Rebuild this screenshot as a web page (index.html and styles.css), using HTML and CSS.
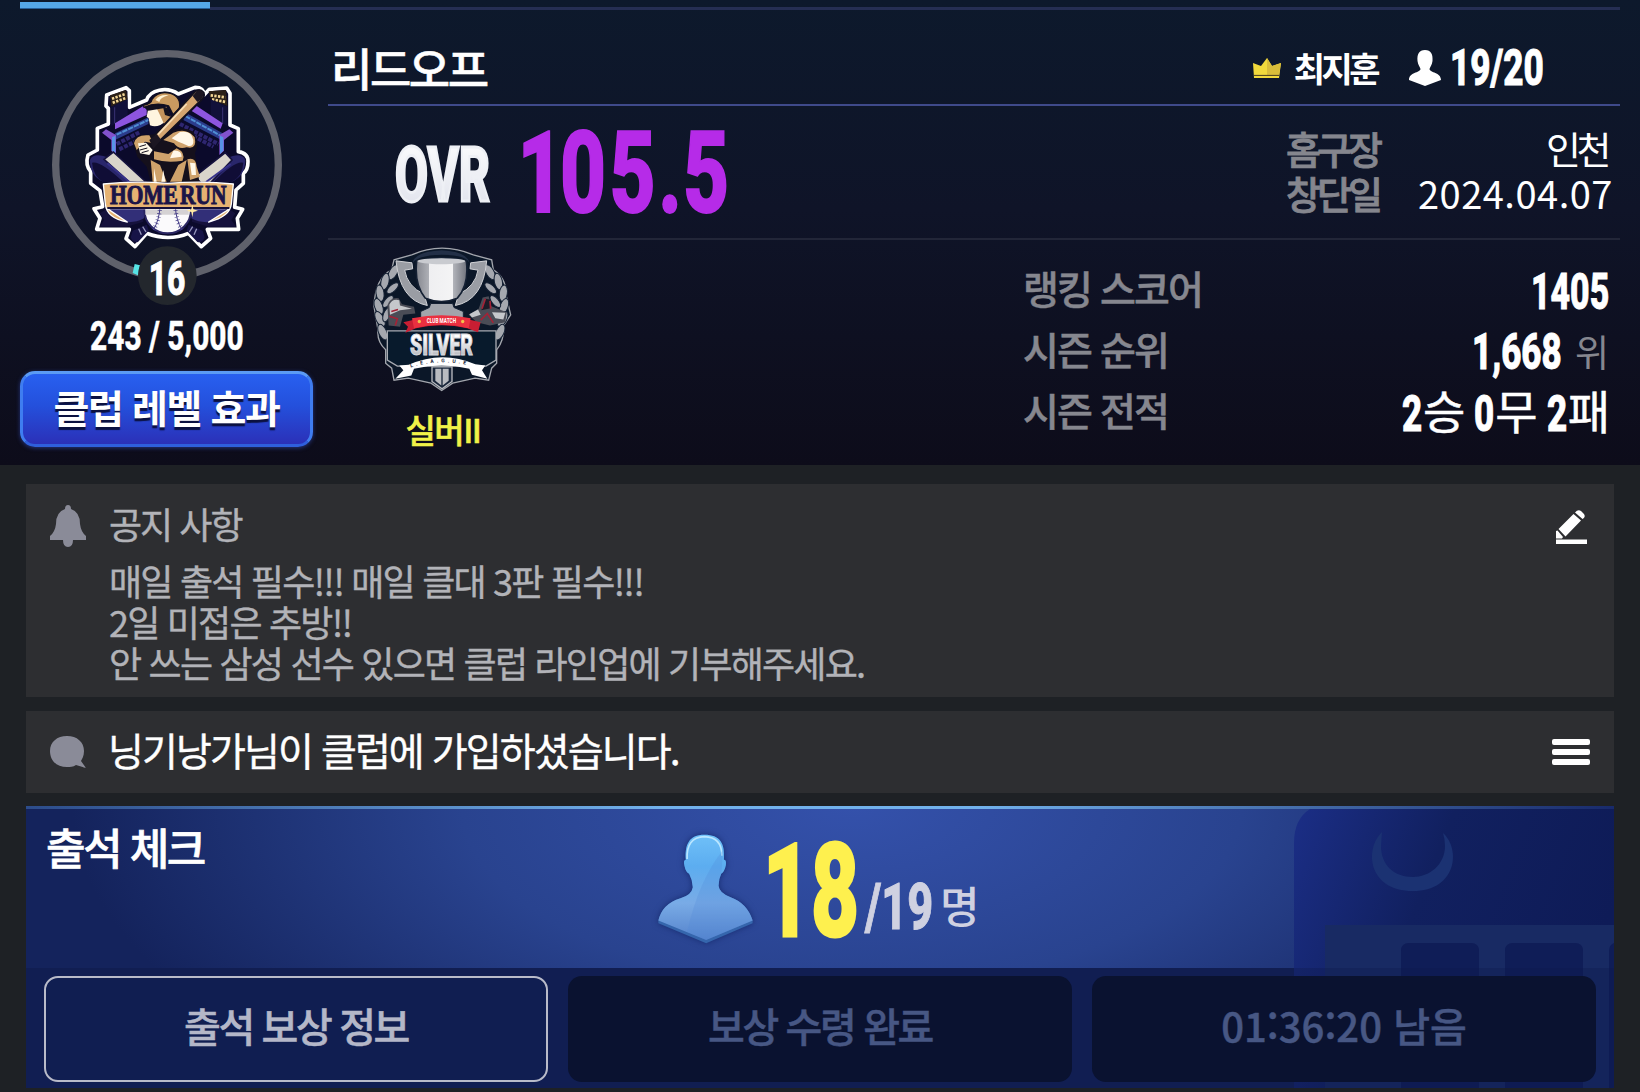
FILE: index.html
```html
<!DOCTYPE html>
<html lang="ko">
<head>
    <meta charset="UTF-8">
    <meta name="viewport" content="width=device-width, initial-scale=1.0">
    <title>리드오프</title>
    <link rel="stylesheet" href="styles.css">
</head>
<body>
    <!-- Club header -->
    <div class="club-header">
        <div class="tab-line">
            <div class="tab-active"></div>
            <div class="tab-rest"></div>
        </div>

        <div class="header-body">
            <div class="club-side">
                <svg class="emblem" viewBox="150 150 699 765">
                    <circle cx="501" cy="495" r="334" fill="none" stroke="#5f616b" stroke-width="22"/>
                    <path d="M404 792l16 4-6 30-16-7z" fill="#56e3e6"/>
                    <circle cx="502" cy="827" r="88" fill="#23272d"/>
                    <!-- stadium outline -->
                    <path d="M320 285L378 263L388 272V322L440 300C450 270 500 258 535 282L585 262Q612 262 612 285L628 268L680 264L690 280V375L715 386V455Q745 460 744 485Q744 510 730 520V550L708 570L704 622L728 628L712 655L716 688H622L632 715L604 740L565 700Q505 725 440 700L405 740L378 716L388 688H290L300 655L282 626L308 620L300 572L272 550V515Q255 495 264 465L292 450V385L325 372V325L318 318Z" fill="#0b0a2b" stroke="#fff" stroke-width="11" stroke-linejoin="round"/>
                    <path d="M270 480Q280 455 330 475L400 545H310Q270 530 270 480zM736 480Q725 455 680 475L600 545H695Q735 530 736 480z" fill="#29266b"/>
                    <path d="M276 488Q300 480 370 546H310Q280 530 276 488zM730 488Q706 480 640 546H694Q728 530 730 488z" fill="#100d36"/>
                    <!-- flood lights -->
                    <path d="M330 286L378 270L383 298L334 320zM626 274L678 270L682 318L632 298z" fill="#2b2017"/>
                    <path d="M336 296L374 283M338 308L376 295M632 286L676 292M636 298L678 306" stroke="#f3d695" stroke-width="8" stroke-dasharray="7 4"/>
                    <path d="M334 320L383 298V350L334 378zM632 298L682 320V378L632 350z" fill="#11103a"/>
                    <path d="M344 322V370M668 322V370" stroke="#393274" stroke-width="3"/>
                    <!-- stands -->
                    <path d="M345 370L430 318L440 330V345L345 388zM668 370L590 318L575 333L662 386z" fill="#8d55df"/>
                    <path d="M345 400L445 352V372L345 420zM668 400L560 340L550 360L660 418z" fill="#2b3c8c"/>
                    <path d="M350 404L445 360M556 348L660 406" stroke="#4f8ed4" stroke-width="6" stroke-dasharray="16 3"/>
                    <path d="M350 432L420 396M358 448L415 420M540 372L655 432M580 408L640 440" stroke="#2e2670" stroke-width="12" stroke-dasharray="12 4"/>
                    <path d="M306 398L318 388L348 405V465L334 452V420zM700 398L688 388L658 405V465L672 452V420z" fill="#8252ce"/>
                    <path d="M336 412L346 407V462L336 452zM670 412L660 407V462L670 452z" fill="#5793e6"/>
                    <!-- crossed bats -->
                    <path d="M312 478L340 456L438 546H388z" fill="#d9d5cb" stroke="#15123d" stroke-width="5"/>
                    <path d="M322 490L388 546" stroke="#37328a" stroke-width="6"/>
                    <path d="M696 480L676 458L584 530L602 548H632z" fill="#d9d5cb" stroke="#15123d" stroke-width="5"/>
                    <path d="M692 492L618 546" stroke="#37328a" stroke-width="6"/>
                    <!-- batter -->
                    <path d="M400 430Q405 400 445 405L500 398Q545 375 580 395Q600 430 585 460L598 545H452L440 500L412 470z" fill="#15101c"/>
                    <path d="M402 430Q408 402 448 406L460 430L435 425L410 450zM520 398Q560 382 584 412Q592 450 560 442Q535 450 522 430L490 420zM462 454L505 462L530 445Q558 458 548 482Q500 490 462 478zM452 480L480 495L500 545H458zM510 545L535 495L560 480L545 545zM562 478Q588 470 590 500L600 530L570 540z" fill="#cfa26b"/>
                    <path d="M540 396Q575 390 580 420Q582 440 565 438Q550 430 535 425L515 415zM520 452Q545 450 545 470L510 475zM414 430L438 428L458 450L448 465L420 460zM462 505L470 545H462zM490 510L496 545H484zM570 488L586 490L588 525L575 525z" fill="#fff8e9"/>
                    <path d="M418 440L438 434M420 450L442 444M425 458L446 452" stroke="#15101c" stroke-width="3"/>
                    <path d="M445 325L495 322L498 362Q475 385 450 376L446 355L440 350z" fill="#fff5df"/>
                    <path d="M470 325L500 320L516 360L492 372L480 345z" fill="#c4935c"/>
                    <path d="M432 318L470 314L505 324L512 350L495 345L490 325L445 332z" fill="#12101f"/>
                    <path d="M430 316Q455 310 456 298Q475 270 512 280Q545 292 538 325L520 345L506 318Q470 305 432 322z" fill="#c99a60" stroke="#12101f" stroke-width="4"/>
                    <path d="M466 300Q480 282 506 286Q480 292 478 306z" fill="#fff0cf"/>
                    <path d="M460 410L586 274Q600 264 611 278Q615 290 604 300L476 426z" fill="#d5a56f" stroke="#12101f" stroke-width="6"/>
                    <path d="M474 404L560 312" stroke="#f8dfb8" stroke-width="5"/>
                    <path d="M578 288L590 274Q602 266 610 280Q612 290 604 298L592 306z" fill="#1c1622"/>
                    <path d="M448 420L470 402L484 420L460 446z" fill="#1c1622"/>
                    <!-- ball and banner -->
                    <path d="M300 640L330 620L430 645V665L380 680H300L312 660zM706 640L676 620L576 645V665L626 680H708L694 660z" fill="#15113c"/>
                    <path d="M328 625H432V655Q400 672 365 664Q332 650 328 625zM676 625H574V655Q606 672 641 664Q674 650 676 625z" fill="#322f78"/>
                    <circle cx="503" cy="630" r="70" fill="#fbfafc" stroke="#2a2662" stroke-width="6"/>
                    <path d="M438 628h128v16H436z" fill="#d5d2d4"/>
                    <path d="M480 620Q478 660 460 690M526 620Q528 660 546 690" fill="none" stroke="#423a86" stroke-width="3"/>
                    <path d="M480 620Q478 660 460 690M526 620Q528 660 546 690" fill="none" stroke="#423a86" stroke-width="13" stroke-dasharray="2 8"/>
                    <path d="M398 692L440 674L446 692L414 726Q398 730 392 712zM608 692L566 674L560 692L592 726Q608 730 614 712z" fill="#171447"/>
                    <path d="M416 686L424 704M428 680L438 696M590 686L582 704M578 680L568 696" stroke="#9797bd" stroke-width="4"/>
                    <path d="M310 552Q400 542 503 550Q610 542 700 552L694 612Q690 650 626 666L690 626H322L382 666Q320 655 316 612z" fill="#e5b272" stroke="#fff" stroke-width="4" stroke-linejoin="round"/>
                    <path d="M322 621h366v6H322z" fill="#15103b"/>
                    <path d="M577 612l3 16 14 4-14 4-3 16-3-16-14-4 14-4z" fill="#ffe9a3"/>
                    <text class="emblem-name" transform="translate(330 613) scale(.8 1)" textLength="437" lengthAdjust="spacingAndGlyphs">HOME RUN</text>
                    <text class="num emblem-level" transform="translate(446 886) scale(.7 1)" font-size="144" textLength="157" lengthAdjust="spacingAndGlyphs">16</text>
                </svg>
                <svg class="exp" width="160" height="40"><text class="num" transform="translate(3 33) scale(.75 1)" font-size="40" textLength="205" lengthAdjust="spacingAndGlyphs">243 / 5,000</text></svg>
                <button class="level-btn">클럽 레벨 효과</button>
            </div>

            <div class="club-main">
                <div class="name-row">
                    <h1 class="club-name">리드오프</h1>
                    <svg class="crown" viewBox="0 0 28 20">
                        <path d="M0 5L8 8L14 0L19 8L28 5L26 20H1z" fill="#f1d93c"/>
                        <path d="M14 0L19 8L28 5L26 17H14z" fill="#d9bd3a"/>
                        <path d="M1 17.400h25" stroke="#453b1f" stroke-width="1"/>
                    </svg>
                    <span class="master">최지훈</span>
                    <svg class="member-icon" viewBox="0 0 32 36"><path d="M16 0C10 0 8 4 8.500 11C9 15 11 17 11.500 19C11 23 0 22 0 30L16 36L32 30C32 22 21 23 20.500 19C21 17 23 15 23.500 11C24 4 22 0 16 0z" fill="#fff"/></svg>
                    <svg class="member-count" width="96" height="44"><text class="num" transform="translate(0 39) scale(.75 1)" font-size="50" textLength="125" lengthAdjust="spacingAndGlyphs">19/20</text></svg>
                </div>

                <div class="ovr-row">
                    <svg width="410" height="132">
                        <defs>
                            <linearGradient id="ovrFill" x1="0" y1="0" x2="0" y2="1">
                                <stop offset="0" stop-color="#fff"/>
                                <stop offset="1" stop-color="#dcdfea"/>
                            </linearGradient>
                        </defs>
                        <text class="num ovr-label" transform="translate(67 95) scale(.65 1)" font-size="76" textLength="146" lengthAdjust="spacingAndGlyphs">OVR</text>
                        <text class="num ovr-value" transform="translate(0 106) scale(.707 1)" font-size="113" x="268 328 398 467 502">105.5</text>
                    </svg>
                    <dl class="club-info">
                        <dt>홈구장</dt><dd class="ground">인천</dd>
                        <dt>창단일</dt><dd>2024.04.07</dd>
                    </dl>
                </div>

                <div class="rank-row">
                    <div class="league">
                        <svg class="league-badge" viewBox="66 34 426 440">
                            <defs>
                                <linearGradient id="cup" x1="0" x2="1">
                                    <stop offset="0" stop-color="#85878f"/>
                                    <stop offset=".25" stop-color="#aeb0b6"/>
                                    <stop offset=".26" stop-color="#efeff1"/>
                                    <stop offset=".72" stop-color="#f4f4f5"/>
                                    <stop offset=".73" stop-color="#b2b4ba"/>
                                    <stop offset="1" stop-color="#70737d"/>
                                </linearGradient>
                                <linearGradient id="silverText" x1="0" y1="0" x2="0" y2="1">
                                    <stop offset=".3" stop-color="#fff"/>
                                    <stop offset="1" stop-color="#9b9ea6"/>
                                </linearGradient>
                            </defs>
                            <path d="M185 60Q275 20 370 60L425 75L430 105Q470 130 468 180L482 240L462 270Q462 320 440 345V385L425 400L416 436L375 430L308 445L275 467L243 445L175 430L132 436L125 400L107 385V345Q80 320 84 285L72 215Q75 130 125 105L132 75z" fill="#0b1728" stroke="#a3a6ad" stroke-width="4"/>
                            <!-- laurel -->
                            <g fill="#a5a8af" stroke="#142033" stroke-width="3">
                                <ellipse cx="130" cy="112" rx="12" ry="25" transform="rotate(30 130 112)"/>
                                <ellipse cx="105" cy="140" rx="12" ry="25" transform="rotate(12 105 140)"/>
                                <ellipse cx="90" cy="175" rx="12" ry="25" transform="rotate(-8 90 175)"/>
                                <ellipse cx="86" cy="215" rx="12" ry="25" transform="rotate(-20 86 215)"/>
                                <ellipse cx="90" cy="253" rx="12" ry="25" transform="rotate(-28 90 253)"/>
                                <ellipse cx="98" cy="292" rx="12" ry="25" transform="rotate(-24 98 292)"/>
                                <ellipse cx="128" cy="160" rx="10" ry="22" transform="rotate(48 128 160)"/>
                                <ellipse cx="114" cy="200" rx="10" ry="22" transform="rotate(40 114 200)"/>
                                <ellipse cx="110" cy="240" rx="10" ry="22" transform="rotate(20 110 240)"/>
                                <ellipse cx="420" cy="112" rx="12" ry="25" transform="rotate(-30 420 112)"/>
                                <ellipse cx="445" cy="140" rx="12" ry="25" transform="rotate(-12 445 140)"/>
                                <ellipse cx="460" cy="175" rx="12" ry="25" transform="rotate(8 460 175)"/>
                                <ellipse cx="462" cy="215" rx="12" ry="25" transform="rotate(20 462 215)"/>
                                <ellipse cx="458" cy="253" rx="12" ry="25" transform="rotate(28 458 253)"/>
                                <ellipse cx="450" cy="292" rx="12" ry="25" transform="rotate(24 450 292)"/>
                                <ellipse cx="422" cy="160" rx="10" ry="22" transform="rotate(-48 422 160)"/>
                                <ellipse cx="436" cy="200" rx="10" ry="22" transform="rotate(-40 436 200)"/>
                            </g>
                            <!-- trophy -->
                            <path d="M138 78L186 84L188 102L164 106Q172 155 222 178L232 212Q150 196 138 78zM410 78L362 84L360 102L384 106Q376 155 326 178L316 212Q400 196 410 78z" fill="#9a9da4" stroke="#d1d2d6" stroke-width="3"/>
                            <path d="M186 90Q190 50 275 46Q355 50 360 90Q355 60 275 60Q195 62 186 90z" fill="#233047"/>
                            <path d="M200 78Q275 60 349 78Q358 150 322 190Q275 210 226 190Q192 150 200 78z" fill="url(#cup)" stroke="#142033" stroke-width="5"/>
                            <ellipse cx="274" cy="79" rx="72" ry="9" fill="#c9cbd0"/>
                            <path d="M242 206h66l4 12 28 12v18H212v-18l26-12z" fill="#a2a5ac" stroke="#142033" stroke-width="3"/>
                            <!-- players -->
                            <path d="M112 212Q120 186 146 190L156 208L192 216L196 236L160 240L150 276L116 272z" fill="#4a4c56"/>
                            <path d="M118 210Q126 190 148 196L150 212L186 222L150 226L120 240z" fill="#c5c7cb"/>
                            <path d="M118 244l24 8-6 20M124 230l20-6" fill="none" stroke="#a32236" stroke-width="5"/>
                            <path d="M356 240L386 222L398 188L416 184L424 214L470 232L466 262L420 272L380 262z" fill="#4a4c56"/>
                            <path d="M358 238L384 224L392 240L366 248zM426 232L466 234L460 254L436 250z" fill="#c5c7cb"/>
                            <path d="M394 226l12-34 14 2 2 26z" fill="#1c1c28"/>
                            <path d="M396 222l10-30M422 222l-2-24M392 256l20-20 18 28" fill="none" stroke="#a32236" stroke-width="5"/>
                            <!-- plate and ribbons -->
                            <path d="M112 288H438V376L408 394H142L112 376z" fill="#081a2c" stroke="#a8abb2" stroke-width="4"/>
                            <path d="M160 262Q275 232 392 262L384 292L352 280Q275 262 198 280L166 294L174 276z" fill="#c81e33"/>
                            <path d="M186 250Q275 232 362 250L356 280Q275 260 192 280z" fill="#ea3040"/>
                            <circle cx="208" cy="260" r="5" fill="#f2c24a"/><circle cx="338" cy="260" r="5" fill="#f2c24a"/>
                            <text class="club-match" transform="translate(230 264) scale(.8 1)" textLength="110" lengthAdjust="spacingAndGlyphs">CLUB MATCH</text>
                            <text class="silver" transform="translate(180 361) scale(.68 1)" textLength="278" lengthAdjust="spacingAndGlyphs">SILVER</text>
                            <path d="M148 392L176 390Q275 345 376 388L406 392L396 406L412 432L366 420L358 402Q275 382 192 402L184 422L136 432L160 406z" fill="#fff"/>
                            <path id="leagueArc" d="M182 398Q275 368 374 396" fill="none"/>
                            <text class="league-word"><textPath href="#leagueArc">L.E.A.G.U.E</textPath></text>
                            <path d="M246 396h60v44l-30 22-30-22z" fill="#19263a" stroke="#b9bbc0" stroke-width="4"/>
                            <path d="M256 402h18v50l-18-14zM278 402h18v36l-18 14z" fill="#b9bbc0"/>
                        </svg>
                        <span class="league-name">실버II</span>
                    </div>

                    <div class="season">
                        <div class="season-row">
                            <span class="season-label">랭킹 스코어</span>
                            <svg class="score" width="80" height="50"><text class="num" transform="translate(0 43) scale(.68 1)" font-size="50" textLength="115" lengthAdjust="spacingAndGlyphs">1405</text></svg>
                        </div>
                        <div class="season-row">
                            <span class="season-label">시즌 순위</span>
                            <svg width="92" height="50"><text class="num" transform="translate(0 42) scale(.7 1)" font-size="50" textLength="128" lengthAdjust="spacingAndGlyphs">1,668</text></svg>
                            <span class="unit">위</span>
                        </div>
                        <div class="season-row">
                            <span class="season-label">시즌 전적</span>
                            <svg width="21" height="50"><text class="num" transform="translate(0 43) scale(.7 1)" font-size="50">2</text></svg>
                            <span class="record">승</span>
                            <svg class="spaced" width="21" height="50"><text class="num" transform="translate(0 43) scale(.7 1)" font-size="50">0</text></svg>
                            <span class="record">무</span>
                            <svg class="spaced" width="21" height="50"><text class="num" transform="translate(0 43) scale(.7 1)" font-size="50">2</text></svg>
                            <span class="record">패</span>
                        </div>
                    </div>
                </div>
            </div>
        </div>
    </div>

    <div class="content">
        <!-- Notice -->
        <div class="panel notice">
            <svg class="panel-icon bell" viewBox="0 0 36 42"><path d="M18 0Q21 0 21 4Q30 7 30 19Q31 27 36 31V35H23Q23 42 18 42Q13 42 13 35H0V31Q5 27 6 19Q6 7 15 4Q15 0 18 0z" fill="#8a8b98"/></svg>
            <div class="notice-text">
                <h2>공지 사항</h2>
                <p>매일 출석 필수!!! 매일 클대 3판 필수!!!<br>2일 미접은 추방!!<br>안 쓰는 삼성 선수 있으면 클럽 라인업에 기부해주세요.</p>
            </div>
            <svg class="pen" viewBox="0 0 31 34">
                <path d="M0 29.500h31v4.500H0zM0 21L1.500 20.500L7 27L6 28.500H0zM2.500 19L17.500 4L25 10.500L9.500 26.500zM19 2.500Q22 -1 25 1L28 4Q30 7 26.500 9z" fill="#fff"/>
            </svg>
        </div>

        <!-- Club message -->
        <div class="panel message">
            <svg class="panel-icon bubble" viewBox="0 0 36 32"><path d="M17 0C27 0 34 6 34 15C34 20 32 23 31 25L36 32L26 29C23 31 20 31 17 31C7 31 0 25 0 15C0 6 7 0 17 0z" fill="#8a8b98"/></svg>
            <p>닝기낭가님이 클럽에 가입하셨습니다.</p>
            <div class="menu"><i></i><i></i><i></i></div>
        </div>

        <!-- Attendance -->
        <div class="attendance">
            <svg class="calendar" viewBox="0 0 320 279">
                <defs>
                    <linearGradient id="calBack" x1="0" y1="0" x2="1" y2=".35">
                        <stop offset="0" stop-color="#1b2e86"/>
                        <stop offset=".45" stop-color="#11205f"/>
                        <stop offset="1" stop-color="#0e1b57"/>
                    </linearGradient>
                </defs>
                <path d="M0 279V34Q0 10 16 0H320V279z" fill="url(#calBack)"/>
                <path d="M88 23C70 40 74 82 119 82C163 82 167 40 149 24Q151 30 151 37C151 56 135 68 119 68C100 68 87 56 87 37z" fill="#1b3272"/>
                <path d="M31 116H320V279H31z" fill="#182a63"/>
                <path d="M107 279V142Q107 134 115 134H177Q185 134 185 142V279zM211 279V142Q211 134 219 134H281Q289 134 289 142V279zM315 279V142Q315 136 320 134V279z" fill="#0f1d57"/>
                <path d="M0 159H320V279H0z" fill="#0e1a4c" opacity=".35"/>
            </svg>
            <div class="attendance-top">
                <h2>출석 체크</h2>
                <svg class="attendee" viewBox="82 100 286 332">
                    <defs>
                        <linearGradient id="personFill" x1="0" y1="0" x2="0" y2="1">
                            <stop offset="0" stop-color="#6fc0f8"/>
                            <stop offset=".3" stop-color="#5cadf0"/>
                            <stop offset=".65" stop-color="#79abe6"/>
                            <stop offset="1" stop-color="#5583cc"/>
                        </linearGradient>
                    </defs>
                    <path d="M222 105C175 105 163 135 166 180Q158 180 162 198Q166 218 176 222Q186 240 187 262Q184 285 150 295Q95 312 84 362V370L227 430L366 370V362Q350 310 300 292Q266 280 264 258Q264 238 272 222Q282 216 286 196Q288 180 280 180C284 130 268 105 222 105z" fill="#3566ad"/>
                    <path d="M222 105C175 105 163 135 166 180Q158 180 162 198Q166 218 176 222Q186 240 187 262Q184 285 150 295Q95 312 84 362L227 420L366 362Q350 310 300 292Q266 280 264 258Q264 238 272 222Q282 216 286 196Q288 180 280 180C284 130 268 105 222 105z" fill="url(#personFill)"/>
                    <path d="M170 178C168 136 184 112 222 111C258 112 274 134 274 168" fill="none" stroke="#b9e6ff" stroke-width="5"/>
                    <path d="M278 150L272 222Q264 238 264 258Q266 280 300 292Q350 310 366 362L227 420L170 396Q205 240 278 150z" fill="#4e86d6" opacity=".25"/>
                </svg>
                <svg class="attend-count" width="177" height="120">
                    <text class="num today" transform="translate(0 100) scale(.64 1)" font-size="130" textLength="150" lengthAdjust="spacingAndGlyphs">18</text>
                    <text class="num total" transform="translate(102 93) scale(.75 1)" font-size="65" textLength="91" lengthAdjust="spacingAndGlyphs">/19</text>
                </svg>
                <span class="people">명</span>
            </div>
            <div class="attendance-buttons">
                <button class="info-btn">출석 보상 정보</button>
                <button>보상 수령 완료</button>
                <button class="time-left">01:36:20 남음</button>
            </div>
        </div>
    </div>
</body>
</html>
```
FILE: styles.css
```css
* {
    box-sizing: border-box;
}

body {
    margin: 0;
    width: 1640px;
    height: 1092px;
    overflow: hidden;
    background: #1e2125;
    color: #fff;
    font-family: "Noto Sans CJK KR", sans-serif;
}

h1, h2, p, dl, dd {
    margin: 0;
    font-weight: 400;
}

svg {
    display: block;
    flex: none;
    overflow: visible;
}

button {
    padding: 0;
    font-family: inherit;
    color: #fff;
    border: none;
}

.num {
    font-family: Roboto, sans-serif;
    font-weight: 800;
    fill: #fff;
    stroke: #fff;
    stroke-width: 1px;
}

/* Header */
.club-header {
    height: 465px;
    padding: 0 20px;
    background: linear-gradient(#0d192c, #0f1428 45%, #0d0c1a);
}

.tab-line {
    display: flex;
    height: 10px;
    align-items: flex-end;
}

.tab-active {
    width: 190px;
    height: 7px;
    margin-bottom: 1px;
    background: #55a8e9;
    border-bottom: 1px solid #27609b;
}

.tab-rest {
    flex: 1;
    height: 3px;
    background: #252e53;
}

.header-body {
    display: flex;
    gap: 15px;
    height: 455px;
}

.club-side {
    width: 293px;
    display: flex;
    flex-direction: column;
    align-items: center;
    padding-top: 40px;
}

.emblem {
    width: 233px;
    height: 255px;
}

.emblem-name {
    font-family: "Liberation Serif", serif;
    font-weight: 700;
    font-size: 80px;
    word-spacing: -12px;
    fill: #1b1548;
    stroke: #1b1548;
    stroke-width: 3px;
}

.emblem-level {
    stroke-width: 3px;
}

.exp {
    margin-top: 12px;
}

.exp .num {
    stroke-width: .4px;
}

.level-btn {
    width: 293px;
    height: 76px;
    margin-top: 14px;
    padding-bottom: 6px;
    border: 3px solid #3f7df0;
    border-top-color: #5b9bf5;
    border-bottom-color: #2f5fdc;
    border-radius: 15px;
    background: linear-gradient(#2860f0, #2450dc 45%, #2b30b8);
    box-shadow: 0 1px 4px #26357c;
    font-size: 39px;
    font-weight: 700;
    letter-spacing: -1.400px;
    line-height: 62px;
    text-shadow: 0 3px 1px #0b1140;
}

.club-main {
    width: 1292px;
}

.name-row {
    display: flex;
    align-items: center;
    height: 96px;
    padding: 21px 74px 0 3px;
    border-bottom: 2px solid #3f4a8b;
}

.club-name {
    flex: 1;
    font-size: 45px;
    font-weight: 500;
    letter-spacing: -2.500px;
    line-height: 60px;
    -webkit-text-stroke: .5px;
}

.crown {
    width: 28px;
    height: 20px;
}

.master {
    margin-left: 13px;
    font-size: 34px;
    font-weight: 700;
    letter-spacing: -3.500px;
    line-height: 50px;
}

.member-icon {
    width: 32px;
    height: 36px;
    margin: 0 9px 0 32px;
}

.ovr-row {
    display: flex;
    justify-content: space-between;
    height: 134px;
    border-bottom: 2px solid #222638;
}

.ovr-label {
    fill: url(#ovrFill);
    stroke: #eef0f5;
    stroke-width: 3px;
}

.ovr-value {
    fill: #b62be8;
    stroke: #b62be8;
    stroke-width: 2px;
}

.club-info {
    display: grid;
    grid-template-columns: 132px 194px;
    grid-auto-rows: 45px;
    width: 326px;
    padding-top: 19px;
    margin-right: 8px;
    font-size: 38px;
    line-height: 45px;
}

.club-info dt {
    color: #85868e;
    font-weight: 500;
    letter-spacing: -4px;
    -webkit-text-stroke: .8px;
}

.club-info dd {
    text-align: right;
    white-space: nowrap;
    letter-spacing: .5px;
}

.club-info .ground {
    padding-right: 5px;
    letter-spacing: -4.500px;
}

.rank-row {
    display: flex;
    justify-content: space-between;
    padding: 6px 12px 0 44px;
}

.league {
    display: flex;
    flex-direction: column;
    align-items: center;
    width: 142px;
}

.league-badge {
    width: 142px;
    height: 147px;
}

.club-match {
    font: 700 20px Roboto, sans-serif;
    fill: #fff;
}

.silver {
    font: 900 86px Roboto, sans-serif;
    fill: url(#silverText);
    stroke: #d9dbe0;
    stroke-width: 3px;
}

.league-word {
    font: 700 15px Roboto, sans-serif;
    letter-spacing: 9px;
    fill: #142033;
}

.league-name {
    margin-top: 12px;
    color: #f0f248;
    font-size: 33px;
    font-weight: 500;
    letter-spacing: -1.500px;
    line-height: 48px;
    -webkit-text-stroke: .5px;
}

.season {
    width: 585px;
    padding-top: 14px;
}

.season-row {
    display: flex;
    align-items: center;
    height: 61px;
}

.season-label {
    flex: 1;
    padding-bottom: 6px;
    color: #86878f;
    font-size: 39px;
    font-weight: 500;
    letter-spacing: -1.900px;
    line-height: 55px;
    -webkit-text-stroke: .5px;
}

.score {
    margin-right: -3px;
}

.unit {
    margin-left: 11px;
    color: #86878f;
    font-size: 37px;
    letter-spacing: -1px;
    line-height: 55px;
}

.record {
    padding-bottom: 6px;
    font-size: 46px;
    line-height: 55px;
    letter-spacing: -2px;
    -webkit-text-stroke: .5px;
}

.spaced {
    margin-left: 11px;
}

/* Panels */
.content {
    padding: 19px 26px 0;
}

.panel {
    display: flex;
    background: #2d2e31;
    padding: 0 24px;
}

.notice {
    height: 213px;
    padding-right: 27px;
}

.bell {
    width: 36px;
    height: 42px;
    margin-top: 21px;
}

.notice-text {
    flex: 1;
    margin-left: 23px;
    color: #b2b3b8;
}

.notice-text h2 {
    margin-top: 13px;
    font-size: 36px;
    letter-spacing: -2px;
    line-height: 52px;
    -webkit-text-stroke: .4px;
}

.notice-text p {
    margin-top: 11px;
    font-size: 36px;
    letter-spacing: -1.800px;
    line-height: 41px;
    -webkit-text-stroke: .4px;
}

.pen {
    width: 31px;
    height: 34px;
    margin-top: 26px;
}

.message {
    height: 82px;
    margin-top: 14px;
    align-items: center;
}

.message p {
    flex: 1;
    margin-left: 22px;
    padding-bottom: 6px;
    font-size: 39px;
    letter-spacing: -1.900px;
    line-height: 60px;
    -webkit-text-stroke: .4px;
}

.bubble {
    width: 36px;
    height: 32px;
}

.menu {
    display: grid;
    gap: 4px;
    width: 38px;
}

.menu i {
    height: 6px;
    border-radius: 2px;
    background: #fff;
}

/* Attendance */
.attendance {
    position: relative;
    height: 282px;
    margin-top: 13px;
    background:
        linear-gradient(90deg, #2c4c8a, #71b1ec 40%, #71b1ec 60%, #182a6b) top / 100% 3px no-repeat,
        linear-gradient(transparent 162px, #111e52 162px),
        radial-gradient(ellipse 780px 360px at 52% 0, #3451ab, #29438f 50%, #14235c);
}

.calendar {
    position: absolute;
    right: 0;
    top: 3px;
    width: 320px;
    height: 279px;
}

.attendance-top {
    position: relative;
    display: flex;
    height: 162px;
    padding-left: 20px;
}

.attendance-top h2 {
    width: 610px;
    padding-top: 10px;
    font-size: 43px;
    font-weight: 500;
    letter-spacing: -2.500px;
    line-height: 60px;
    -webkit-text-stroke: .6px;
}

.attendee {
    width: 97px;
    height: 111px;
    margin: 27px 9px 0 1px;
    filter: drop-shadow(0 0 3px #172c70);
}

.attend-count {
    margin-top: 30px;
}

.num.today {
    fill: #fef04e;
    stroke: #fef04e;
    stroke-width: 3px;
}

.num.total {
    fill: #cfd1e1;
    stroke: #cfd1e1;
}

.people {
    padding-top: 68px;
    color: #cfd1e1;
    font-size: 43px;
    font-weight: 500;
    line-height: 60px;
}

.attendance-buttons {
    position: relative;
    display: grid;
    grid-template-columns: repeat(3, 504px);
    gap: 20px;
    padding: 8px 18px 0;
}

.attendance-buttons button {
    height: 106px;
    padding-bottom: 8px;
    border-radius: 14px;
    background: #0a1230;
    color: #475784;
    font-size: 40px;
    font-weight: 500;
    letter-spacing: -2.400px;
    line-height: 92px;
    -webkit-text-stroke: .5px;
}

.attendance-buttons .time-left {
    letter-spacing: 0;
}

.attendance-buttons .info-btn {
    border: 2px solid #b9bbc9;
    background: #101e51;
    color: #b4b7c8;
}
```
